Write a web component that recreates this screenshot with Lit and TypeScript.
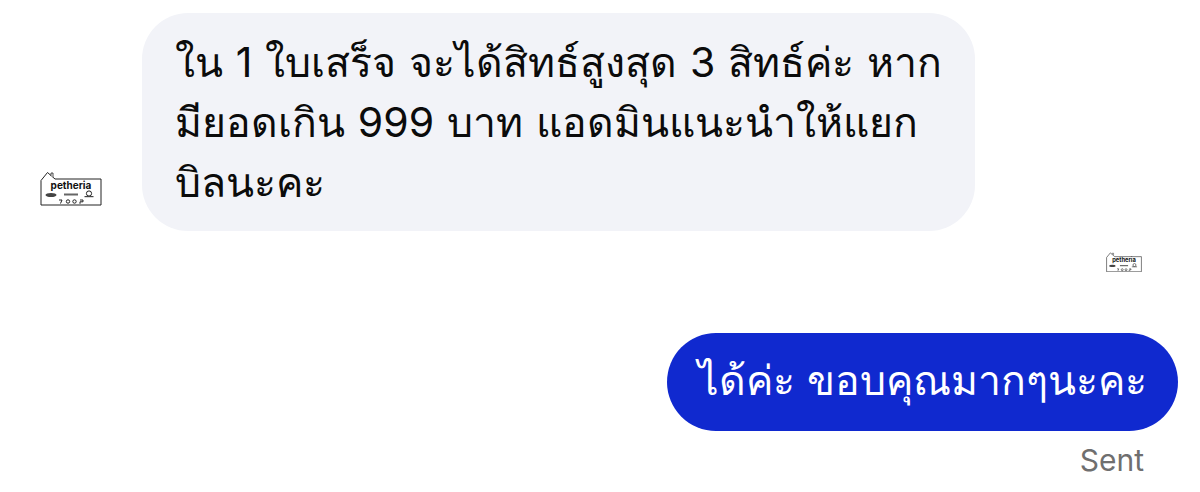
import { LitElement, html, css, svg } from "lit";
import { customElement, property } from "lit/decorators.js";

const logoBody = svg`
  <path d="M1 34V9.5L7.5 1.5L15 8H61V34Z" fill="#fff" stroke="#222" stroke-width="1"/>
  <path d="M11 5V2h2v4" fill="#fff" stroke="#222" stroke-width="0.8"/>
  <text x="31" y="17.5" text-anchor="middle" font-family="Inter, sans-serif" font-size="10" font-weight="700" fill="#111">petheria</text>
  <ellipse cx="11" cy="24" rx="5.5" ry="2" fill="#444"/>
  <rect x="24" y="22.5" width="14" height="2" fill="#666"/>
  <circle cx="49" cy="22.5" r="2.6" fill="none" stroke="#222"/>
  <rect x="44.5" y="25" width="9" height="1.2" fill="#444"/>
  <path d="M19 29h3l-1.5 3.5" fill="none" stroke="#222"/>
  <circle cx="28" cy="30.5" r="1.7" fill="none" stroke="#222"/>
  <circle cx="34.5" cy="30.5" r="1.7" fill="none" stroke="#222"/>
  <path d="M40 29h3v1.8h-3v2" fill="none" stroke="#222"/>
`;

@customElement("pet-logo")
class PetLogo extends LitElement {
  @property({ type: Number }) width = 62;
  static styles = css`
    :host { display: block; line-height: 0; }
  `;
  render() {
    const h = (this.width * 35) / 62;
    return html`<svg width=${this.width} height=${h} viewBox="0 0 62 35">${logoBody}</svg>`;
  }
}

@customElement("app-root")
class AppRoot extends LitElement {
  static styles = css`
    :host {
      display: block;
      width: 1200px;
      height: 492px;
      background: #fff;
      overflow: hidden;
      font-family: Inter, "Noto Sans", sans-serif;
    }
    .page {
      display: flex;
      flex-direction: column;
      padding-top: 13px;
    }
    .incoming {
      display: flex;
      align-items: flex-end;
      gap: 40px;
      padding-left: 40px;
    }
    .incoming pet-logo { margin-bottom: 25px; }
    .bubble-in {
      box-sizing: border-box;
      width: 833px;
      height: 218px;
      padding: 19px 33px 0;
      border-radius: 46px;
      background: #f2f3f8;
      color: #0b0b0b;
      font-size: 41px;
      word-spacing: 1.3px;
      line-height: 60px;
      white-space: nowrap;
    }
    .seen {
      display: flex;
      justify-content: flex-end;
      padding: 21px 58px 0 0;
    }
    .outgoing {
      display: flex;
      justify-content: flex-end;
      padding: 61px 22px 0 0;
    }
    .bubble-out {
      box-sizing: border-box;
      width: 511px;
      height: 98px;
      border-radius: 49px;
      background: #1029cf;
      color: #fff;
      font-size: 41px;
      line-height: 95px;
      text-align: center;
      white-space: nowrap;
    }
    .sent {
      align-self: flex-end;
      margin: 12px 56px 0 0;
      color: #6f6f6f;
      font-size: 30px;
      line-height: 34px;
    }
  `;
  render() {
    return html`<div class="page">
      <div class="incoming">
        <pet-logo .width=${62}></pet-logo>
        <div class="bubble-in">ใน 1 ใบเสร็จ จะได้สิทธ์สูงสุด 3 สิทธ์ค่ะ หาก<br />มียอดเกิน 999 บาท แอดมินแนะนำให้แยก<br />บิลนะคะ</div>
      </div>
      <div class="seen"><pet-logo .width=${36}></pet-logo></div>
      <div class="outgoing"><div class="bubble-out">ได้ค่ะ ขอบคุณมากๆนะคะ</div></div>
      <div class="sent">Sent</div>
    </div>`;
  }
}
